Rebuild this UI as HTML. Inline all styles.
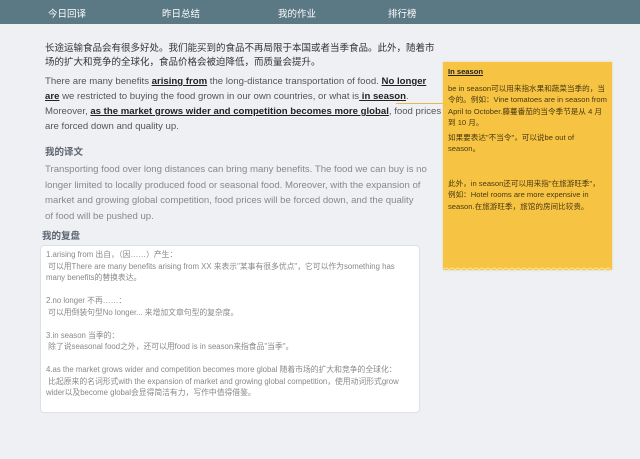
<!DOCTYPE html>
<html><head><meta charset="utf-8"><style>
body{margin:0;width:640px;height:459px;background:#eef0f3;font-family:"Liberation Sans","Noto Sans CJK SC",sans-serif;position:relative;overflow:hidden}
.nav{position:absolute;left:0;top:0;width:640px;height:24px;background:#5b7885;color:#fff;font-size:9.5px}
.nav span{position:absolute;top:6px}
.a{position:absolute;white-space:nowrap}
.p{font-size:9.6px;line-height:15px;color:#333}
u b,b u{color:#222}
h4{margin:0;font-size:9.5px;color:#5c6470}
.box{position:absolute;left:40px;top:245px;width:380px;height:168px;background:#fff;border:1px solid #dde0e5;border-radius:4px;font-size:7.8px;line-height:11.5px;color:#888;padding:3px 5px;box-sizing:border-box}
.y{position:absolute;left:443px;top:62px;width:169px;height:208px;background:#f6c343;font-size:7.6px;line-height:11.5px;color:#4a3a10;padding:4px 5px;box-sizing:border-box;box-shadow:0 0 2px #e0d0a0}
</style></head><body>
<div class="nav"><span style="left:48px">今日回译</span><span style="left:162px">昨日总结</span><span style="left:278px">我的作业</span><span style="left:388px">排行榜</span></div>
<div class="a p" style="left:45px;top:42px;line-height:14px;font-size:9.5px">长途运输食品会有很多好处。我们能买到的食品不再局限于本国或者当季食品。此外，随着市<br>场的扩大和竞争的全球化，食品价格会被迫降低，而质量会提升。</div>
<div class="a p" style="left:45px;top:74px;color:#555">There are many benefits <b><u>arising from</u></b> the long-distance transportation of food. <b><u>No longer</u></b><br><b><u>are</u></b> we restricted to buying the food grown in our own countries, or what is<b><u> in season</u></b>.<br>Moreover, <b><u>as the market grows wider and competition becomes more global</u></b>, food prices<br>are forced down and quality up.</div>
<div style="position:absolute;left:396px;top:103px;width:47px;height:1px;background:#e8b850"></div>
<div class="a" style="left:45px;top:144px"><h4>我的译文</h4></div>
<div class="a p" style="left:45px;top:162px;color:#888;line-height:15.5px">Transporting food over long distances can bring many benefits. The food we can buy is no<br>longer limited to locally produced food or seasonal food. Moreover, with the expansion of<br>market and growing global competition, food prices will be forced down, and the quality<br>of food will be pushed up.</div>
<div class="a" style="left:42px;top:228px"><h4>我的复盘</h4></div>
<div class="box">1.arising from 出自，（因……）产生：<br>&nbsp;可以用There are many benefits arising from XX 来表示"某事有很多优点"，它可以作为something has many benefits的替换表达。<br><br>2.no longer 不再……：<br>&nbsp;可以用倒装句型No longer... 来增加文章句型的复杂度。<br><br>3.in season 当季的：<br>&nbsp;除了说seasonal food之外，还可以用food is in season来指食品"当季"。<br><br>4.as the market grows wider and competition becomes more global 随着市场的扩大和竞争的全球化：<br>&nbsp;比起原来的名词形式with the expansion of market and growing global competition，使用动词形式grow wider以及become global会显得简洁有力，写作中值得借鉴。</div>
<div class="y"><b><u>In season</u></b><div style="height:5px"></div>be in season可以用来指水果和蔬菜当季的，当令的。例如：Vine tomatoes are in season from April to October.藤蔓番茄的当令季节是从 4 月到 10 月。<div style="height:3px"></div>如果要表达"不当令"，可以说be out of season。<br><br><br>此外，in season还可以用来指"在旅游旺季"，例如：Hotel rooms are more expensive in season.在旅游旺季，旅馆的房间比较贵。</div>
<svg style="position:absolute;left:443px;top:266px" width="169" height="5"><path d="M0 4 Q3 0 6 4 Q9 0 12 4 Q15 0 18 4 Q21 0 24 4 Q27 0 30 4 Q33 0 36 4 Q39 0 42 4 Q45 0 48 4 Q51 0 54 4 Q57 0 60 4 Q63 0 66 4 Q69 0 72 4 Q75 0 78 4 Q81 0 84 4 Q87 0 90 4 Q93 0 96 4 Q99 0 102 4 Q105 0 108 4 Q111 0 114 4 Q117 0 120 4 Q123 0 126 4 Q129 0 132 4 Q135 0 138 4 Q141 0 144 4 Q147 0 150 4 Q153 0 156 4 Q159 0 162 4 Q165 0 168 4" fill="none" stroke="#f8e3a8" stroke-width="1"/></svg>
</body></html>
